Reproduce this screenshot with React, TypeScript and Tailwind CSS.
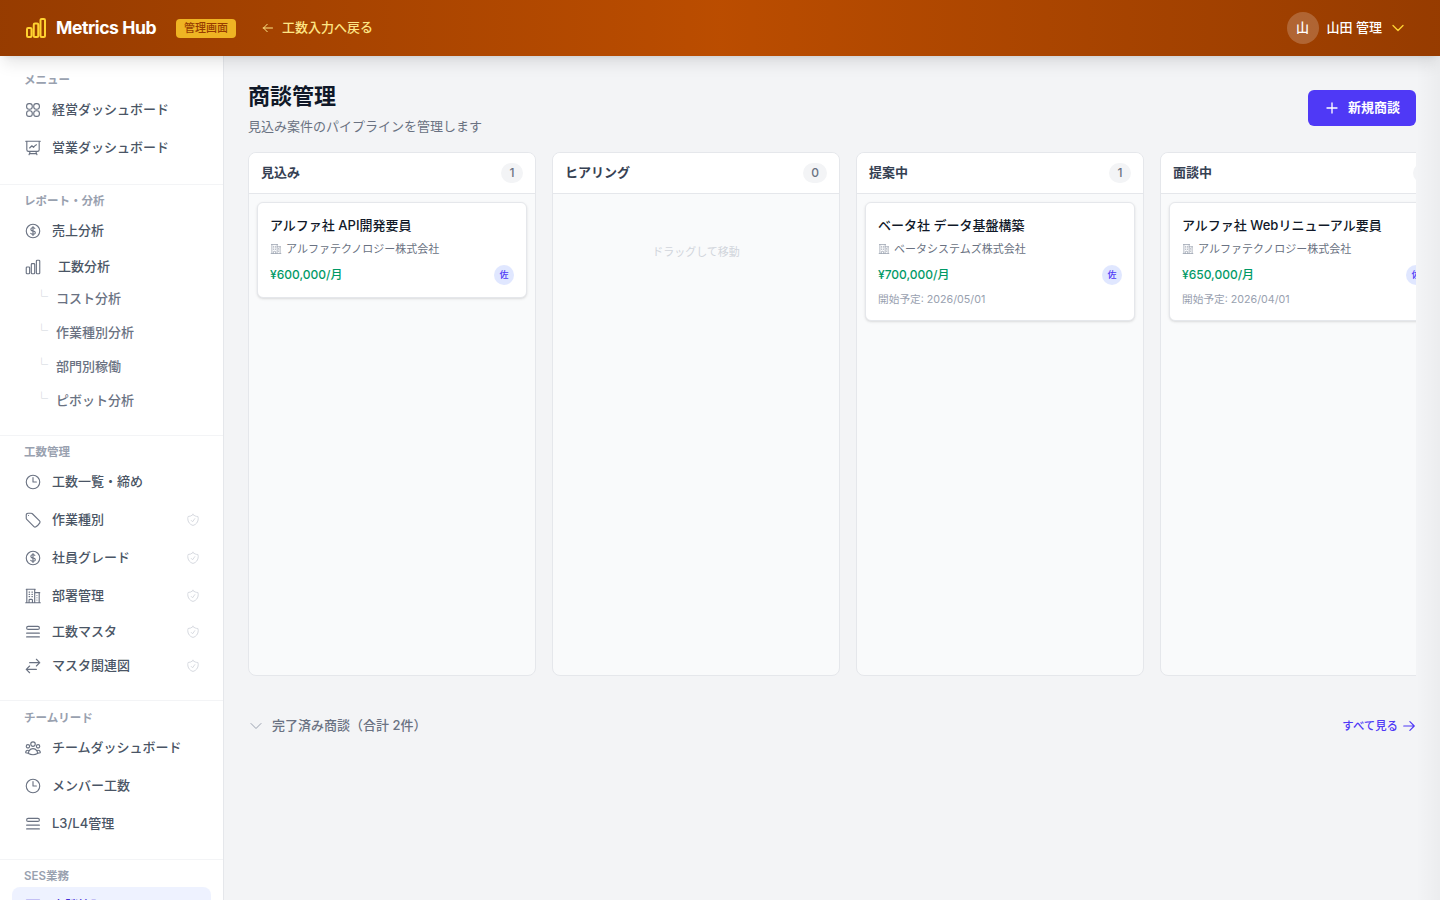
import {
  HiOutlineArrowLeft,
  HiOutlineArrowRight,
  HiOutlineArrowsRightLeft,
  HiOutlineBuildingOffice2,
  HiOutlineChartBar,
  HiOutlineChevronDown,
  HiOutlineClock,
  HiOutlineCurrencyDollar,
  HiOutlinePlus,
  HiOutlinePresentationChartLine,
  HiOutlineShieldCheck,
  HiOutlineTableCells,
  HiOutlineTag,
  HiOutlineUserGroup,
} from "react-icons/hi2";
import type { ComponentType } from "react";

const font = "font-['Inter','Noto_Sans_CJK_JP',sans-serif]";

type IconProps = { className?: string };

function GridIcon({ className }: IconProps) {
  return (
    <svg viewBox="0 0 24 24" fill="none" stroke="currentColor" strokeWidth="1.5" className={className}>
      <rect x="3.5" y="3.5" width="7.5" height="7.5" rx="3.2" />
      <rect x="13" y="3.5" width="7.5" height="7.5" rx="3.2" />
      <rect x="3.5" y="13" width="7.5" height="7.5" rx="3.2" />
      <rect x="13" y="13" width="7.5" height="7.5" rx="3.2" />
    </svg>
  );
}

function StackIcon({ className }: IconProps) {
  return (
    <svg viewBox="0 0 24 24" fill="none" stroke="currentColor" strokeWidth="1.5" strokeLinecap="round" className={className}>
      <rect x="3.5" y="4.5" width="17" height="4" rx="2" />
      <path d="M3.5 13.5h17M3.5 18.5h17" />
    </svg>
  );
}

type NavItem = { label: string; icon: ComponentType<IconProps>; admin?: boolean; h?: string };

function NavRow({ label, icon: Icon, admin, h = "h-[38px]" }: NavItem) {
  return (
    <div className={`flex items-center px-3 ${h}`}>
      <Icon className="size-[18px] shrink-0 text-gray-500" />
      <span className="ml-[10px] text-[13px] font-medium text-gray-600">{label}</span>
      {admin && <HiOutlineShieldCheck className="-mr-[1px] ml-auto size-3.5 text-gray-300" />}
    </div>
  );
}

function SubRow({ label }: { label: string }) {
  return (
    <div className="flex h-[34px] items-center pl-[23px] text-[13px] font-medium text-gray-500">
      <span className="relative -top-[3px] w-[21px] text-[13px] leading-none text-gray-300">└</span>
      <span>{label}</span>
    </div>
  );
}

function SectionLabel({ children }: { children: string }) {
  return <div className="mb-[3px] px-3 text-[11.5px] font-semibold leading-4 text-gray-400">{children}</div>;
}

function Sidebar() {
  return (
    <aside className="w-[224px] shrink-0 overflow-hidden border-r border-gray-200 bg-white">
      <div className="border-b border-gray-100 px-3 pt-4 pb-[17px]">
        <SectionLabel>メニュー</SectionLabel>
        <NavRow label="経営ダッシュボード" icon={GridIcon} />
        <NavRow label="営業ダッシュボード" icon={HiOutlinePresentationChartLine} />
      </div>
      <div className="border-b border-gray-100 px-3 pt-2 pb-[17px]">
        <SectionLabel>レポート・分析</SectionLabel>
        <NavRow label="売上分析" icon={HiOutlineCurrencyDollar} />
        <div className="flex h-[34px] items-center px-3">
          <HiOutlineChartBar className="size-[18px] shrink-0 text-gray-500" />
          <span className="ml-4 text-[13px] font-medium text-gray-600">工数分析</span>
        </div>
        <div className="-mt-[2px]">
          <SubRow label="コスト分析" />
          <SubRow label="作業種別分析" />
          <SubRow label="部門別稼働" />
          <SubRow label="ピボット分析" />
        </div>
      </div>
      <div className="border-b border-gray-100 px-3 pt-2 pb-[17px]">
        <SectionLabel>工数管理</SectionLabel>
        <NavRow label="工数一覧・締め" icon={HiOutlineClock} />
        <NavRow label="作業種別" icon={HiOutlineTag} admin />
        <NavRow label="社員グレード" icon={HiOutlineCurrencyDollar} admin />
        <NavRow label="部署管理" icon={HiOutlineBuildingOffice2} admin />
        <NavRow label="工数マスタ" icon={StackIcon} admin h="h-[34px]" />
        <NavRow label="マスタ関連図" icon={HiOutlineArrowsRightLeft} admin h="h-[34px]" />
      </div>
      <div className="border-b border-gray-100 px-3 pt-[9px] pb-[16px]">
        <SectionLabel>チームリード</SectionLabel>
        <NavRow label="チームダッシュボード" icon={HiOutlineUserGroup} />
        <NavRow label="メンバー工数" icon={HiOutlineClock} />
        <NavRow label="L3/L4管理" icon={StackIcon} />
      </div>
      <div className="px-3 pt-2">
        <SectionLabel>SES業務</SectionLabel>
        <div className="mt-[1px] rounded-lg bg-indigo-50">
          <div className="flex h-[38px] items-center px-3">
            <HiOutlineTableCells className="size-[18px] shrink-0 text-indigo-700" />
            <span className="ml-[10px] text-[13px] font-medium text-indigo-700">商談管理</span>
          </div>
        </div>
      </div>
    </aside>
  );
}

type Deal = { title: string; company: string; price: string; start?: string };

function DealCard({ title, company, price, start }: Deal) {
  return (
    <div className="rounded-md border border-gray-200 bg-white p-3 shadow-sm">
      <div className="text-[13px] font-medium leading-5 text-gray-900">{title}</div>
      <div className="mt-[5px] flex h-[18px] items-center gap-1 text-[11px] text-gray-500">
        <HiOutlineBuildingOffice2 className="size-3 text-gray-400" />
        <span>{company}</span>
      </div>
      <div className="mt-[7px] flex h-5 items-center justify-between">
        <span className="text-[12px] font-medium text-emerald-600">{price}</span>
        <span className="flex size-5 items-center justify-center rounded-full bg-indigo-100 text-[9px] font-medium text-indigo-600">佐</span>
      </div>
      {start && <div className="mt-[7px] text-[10.7px] leading-4 text-gray-400">{start}</div>}
    </div>
  );
}

function Column({ name, count, deals, empty }: { name: string; count: number; deals: Deal[]; empty?: boolean }) {
  return (
    <div className="flex h-[524px] w-[288px] shrink-0 flex-col overflow-hidden rounded-lg border border-gray-200 bg-gray-50">
      <div className="flex h-[41px] shrink-0 items-center justify-between border-b border-gray-200 bg-white px-3">
        <span className="text-[13px] font-semibold text-gray-700">{name}</span>
        <span className="flex h-5 min-w-[22px] items-center justify-center rounded-full bg-gray-100 px-2 text-[12px] font-medium text-gray-500">{count}</span>
      </div>
      <div className="flex flex-col gap-2 p-2">
        {deals.map((d) => (
          <DealCard key={d.title} {...d} />
        ))}
        {empty && <div className="pt-[42px] text-center text-[11px] leading-4 text-gray-300">ドラッグして移動</div>}
      </div>
    </div>
  );
}

export default function App() {
  return (
    <div className={`relative flex h-screen flex-col overflow-hidden bg-gray-100 ${font}`}>
      <header className="relative z-10 flex h-14 shrink-0 items-center bg-gradient-to-r from-amber-800 via-amber-700 to-amber-800 pr-[34px] pl-6 shadow-lg">
        <HiOutlineChartBar strokeWidth={2} className="size-6 text-amber-300" />
        <span className="ml-2 text-[17.6px] font-bold tracking-tight text-white">Metrics Hub</span>
        <span className="ml-5 rounded bg-[#efb423] px-2 py-[2px] text-[11px] leading-[15px] font-medium text-amber-800">管理画面</span>
        <span className="ml-[26px] flex items-center gap-2 text-[13px] font-medium text-amber-200">
          <HiOutlineArrowLeft strokeWidth={2} className="size-3" />
          工数入力へ戻る
        </span>
        <div className="ml-auto flex items-center gap-2">
          <span className="flex size-8 items-center justify-center rounded-full bg-white/20 text-[13px] font-medium text-white">山</span>
          <span className="text-[13px] font-medium text-white">山田 管理</span>
          <HiOutlineChevronDown strokeWidth={2} className="size-4 text-amber-300" />
        </div>
      </header>
      <div className="flex min-h-0 flex-1">
        <Sidebar />
        <main className="min-w-0 flex-1 px-6 pt-6">
          <div className="flex items-start justify-between">
            <div>
              <h1 className="text-[22px] font-bold leading-8 text-gray-900">商談管理</h1>
              <p className="mt-[4px] text-[13px] leading-5 text-gray-500">見込み案件のパイプラインを管理します</p>
            </div>
            <button className="mt-[10px] flex h-9 items-center gap-2 rounded-md bg-[#4f39f6] px-4 text-[13px] font-semibold text-white">
              <HiOutlinePlus strokeWidth={2} className="size-4" />
              新規商談
            </button>
          </div>
          <div className="mt-[16px] flex gap-4 overflow-hidden">
            <Column name="見込み" count={1} deals={[{ title: "アルファ社 API開発要員", company: "アルファテクノロジー株式会社", price: "¥600,000/月" }]} />
            <Column name="ヒアリング" count={0} deals={[]} empty />
            <Column name="提案中" count={1} deals={[{ title: "ベータ社 データ基盤構築", company: "ベータシステムズ株式会社", price: "¥700,000/月", start: "開始予定: 2026/05/01" }]} />
            <Column name="面談中" count={1} deals={[{ title: "アルファ社 Webリニューアル要員", company: "アルファテクノロジー株式会社", price: "¥650,000/月", start: "開始予定: 2026/04/01" }]} />
          </div>
          <div className="mt-[40px] flex items-center justify-between">
            <div className="flex items-center gap-2 text-[13px] font-medium text-gray-500">
              <HiOutlineChevronDown className="size-4 text-gray-400" />
              完了済み商談（合計 2件）
            </div>
            <div className="flex items-center gap-1 text-[11.4px] font-medium text-indigo-600">
              <span className="relative top-[1px]">すべて見る</span>
              <HiOutlineArrowRight strokeWidth={2} className="size-[14px]" />
            </div>
          </div>
        </main>
      </div>
      {/* scroll edge fade */}
      <div className="pointer-events-none absolute top-14 right-0 bottom-0 w-6 bg-gradient-to-r from-transparent to-black/[0.03]" />
    </div>
  );
}
